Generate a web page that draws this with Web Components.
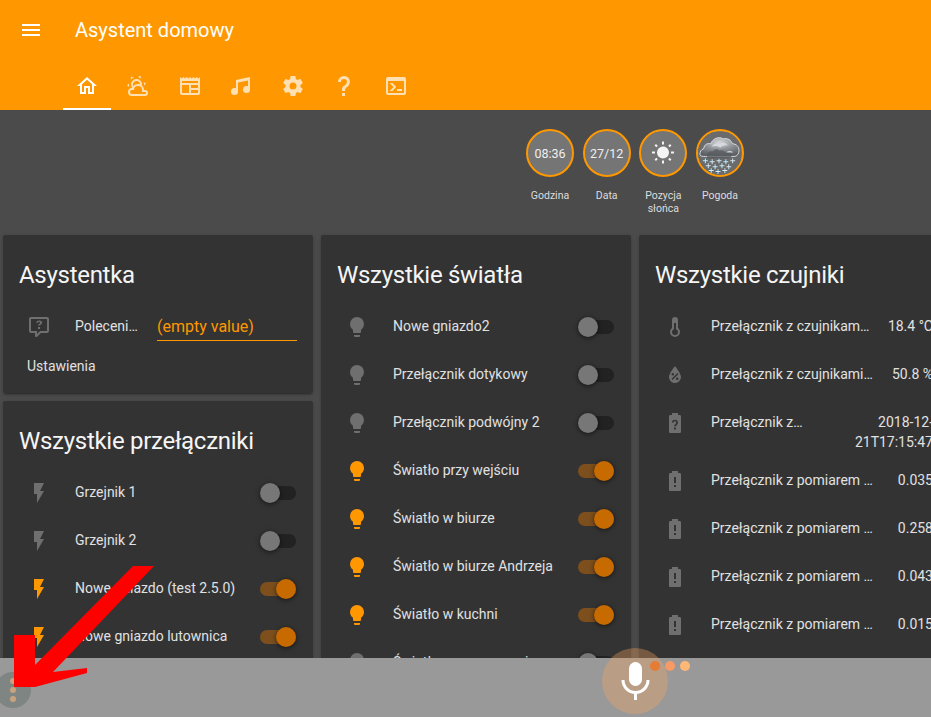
<!DOCTYPE html>
<html lang="pl">
<head>
<meta charset="utf-8">
<title>Asystent domowy</title>
<style>
  html, body { margin: 0; height: 100%; background: #4b4b4b; }
  body { font-family: Roboto, "Liberation Sans", sans-serif; overflow: hidden; }
</style>
</head>
<body>
<ha-app>
  <ha-toolbar slot="top" heading="Asystent domowy"></ha-toolbar>

  <ha-badges slot="badges">
    <ha-badge label="Godzina">08:36</ha-badge>
    <ha-badge label="Data">27/12</ha-badge>
    <ha-badge label="Pozycja słońca"><ha-icon name="sun" style="--size:24px;color:#f4f4f4"></ha-icon></ha-badge>
    <ha-badge label="Pogoda" pic><weather-pic></weather-pic></ha-badge>
  </ha-badges>

  <ha-column slot="cols">
    <ha-card heading="Asystentka">
      <ha-row icon="ask" name="Polecenie głosowe">
        <ha-input slot="end">(empty value)</ha-input>
      </ha-row>
      <ha-link>Ustawienia</ha-link>
    </ha-card>
    <ha-card heading="Wszystkie przełączniki">
      <ha-row icon="flash" name="Grzejnik 1"><ha-toggle slot="end"></ha-toggle></ha-row>
      <ha-row icon="flash" name="Grzejnik 2"><ha-toggle slot="end"></ha-toggle></ha-row>
      <ha-row icon="flash" on name="Nowe gniazdo (test 2.5.0)"><ha-toggle slot="end" on></ha-toggle></ha-row>
      <ha-row icon="flash" on name="Nowe gniazdo lutownica"><ha-toggle slot="end" on></ha-toggle></ha-row>
    </ha-card>
  </ha-column>

  <ha-column slot="cols">
    <ha-card heading="Wszystkie światła">
      <ha-row icon="bulb" name="Nowe gniazdo2"><ha-toggle slot="end"></ha-toggle></ha-row>
      <ha-row icon="bulb" name="Przełącznik dotykowy"><ha-toggle slot="end"></ha-toggle></ha-row>
      <ha-row icon="bulb" name="Przełącznik podwójny 2"><ha-toggle slot="end"></ha-toggle></ha-row>
      <ha-row icon="bulb" on name="Światło przy wejściu"><ha-toggle slot="end" on></ha-toggle></ha-row>
      <ha-row icon="bulb" on name="Światło w biurze"><ha-toggle slot="end" on></ha-toggle></ha-row>
      <ha-row icon="bulb" on name="Światło w biurze Andrzeja"><ha-toggle slot="end" on></ha-toggle></ha-row>
      <ha-row icon="bulb" on name="Światło w kuchni"><ha-toggle slot="end" on></ha-toggle></ha-row>
      <ha-row icon="bulb" name="Światło w serwerowni"><ha-toggle slot="end"></ha-toggle></ha-row>
    </ha-card>
  </ha-column>

  <ha-column slot="cols">
    <ha-card heading="Wszystkie czujniki">
      <ha-row icon="thermo" name="Przełącznik z czujnikami: temperatura"><ha-value slot="end">18.4 °C</ha-value></ha-row>
      <ha-row icon="drop" name="Przełącznik z czujnikami: wilgotność"><ha-value slot="end">50.8 %</ha-value></ha-row>
      <ha-row icon="batq" name="Przełącznik z czujnikami: ostatni odczyt" tall><ha-value slot="end" wide>2018-12-<br>21T17:15:47</ha-value></ha-row>
      <ha-row icon="bata" name="Przełącznik z pomiarem mocy 1"><ha-value slot="end">0.035</ha-value></ha-row>
      <ha-row icon="bata" name="Przełącznik z pomiarem mocy 2"><ha-value slot="end">0.258</ha-value></ha-row>
      <ha-row icon="bata" name="Przełącznik z pomiarem mocy 3"><ha-value slot="end">0.043</ha-value></ha-row>
      <ha-row icon="bata" name="Przełącznik z pomiarem mocy 4"><ha-value slot="end">0.015</ha-value></ha-row>
    </ha-card>
  </ha-column>

  <voice-bar slot="bar"></voice-bar>
</ha-app>

<script>
const PATHS = {
  menu: 'M3 6h18v2H3zM3 11h18v2H3zM3 16h18v2H3z',
  home: 'M12 5.69l5 4.5V18h-2v-6H9v6H7v-7.81l5-4.5M12 3L2 12h3v8h6v-6h2v6h6v-8h3L12 3z',
  cloudsun: 'M12.74,5.47C15.1,6.5 16.35,9.03 15.92,11.46C17.19,12.56 18,14.19 18,16V16.17C18.31,16.06 18.65,16 19,16A3,3 0 0,1 22,19A3,3 0 0,1 19,22H6A4,4 0 0,1 2,18A4,4 0 0,1 6,14H6.27C5,12.45 4.6,10.24 5.5,8.26C6.72,5.5 9.97,4.24 12.74,5.47M11.93,7.3C10.16,6.5 8.09,7.31 7.31,9.07C6.85,10.09 6.93,11.22 7.41,12.13C8.5,10.83 10.16,10 12,10C12.7,10 13.38,10.12 14,10.34C13.94,9.06 13.18,7.86 11.93,7.3M13.55,3.64C13,3.4 12.45,3.23 11.88,3.12L14.37,1.82L15.27,4.71C14.76,4.29 14.19,3.93 13.55,3.64M6.09,4.44C5.6,4.79 5.17,5.19 4.8,5.63L4.91,2.82L7.87,3.5C7.25,3.71 6.65,4.03 6.09,4.44M18,9.71C17.91,9.12 17.78,8.55 17.59,8L19.97,9.5L17.92,11.73C18.03,11.08 18.05,10.4 18,9.71M3.04,11.3C3.11,11.9 3.24,12.47 3.43,13L1.06,11.5L3.1,9.28C3,9.93 2.97,10.61 3.04,11.3M19,18H16V16A4,4 0 0,0 12,12A4,4 0 0,0 8,16H6A2,2 0 0,0 4,18A2,2 0 0,0 6,20H19A1,1 0 0,0 20,19A1,1 0 0,0 19,18Z',
  board: 'M2 3l1.67 1.5L5.33 3 7 4.5 8.67 3l1.66 1.5L12 3l1.67 1.5L15.33 3 17 4.5 18.67 3l1.66 1.5L22 3v16a2 2 0 0 1-2 2H4a2 2 0 0 1-2-2V3zM4 7v2h16V7H4zm0 4v8h7v-8H4zm9 0v3h7v-3h-7zm0 5v3h7v-3h-7z',
  music: 'M21,3V15.5A3.5,3.5 0 0,1 17.5,19A3.5,3.5 0 0,1 14,15.5A3.5,3.5 0 0,1 17.5,12C18.04,12 18.55,12.12 19,12.34V6.47L9,8.6V17.5A3.5,3.5 0 0,1 5.5,21A3.5,3.5 0 0,1 2,17.5A3.5,3.5 0 0,1 5.5,14C6.04,14 6.55,14.12 7,14.34V6L21,3Z',
  gear: 'M12,15.5A3.5,3.5 0 0,1 8.5,12A3.5,3.5 0 0,1 12,8.5A3.5,3.5 0 0,1 15.5,12A3.5,3.5 0 0,1 12,15.5M19.43,12.97C19.47,12.65 19.5,12.33 19.5,12C19.5,11.67 19.47,11.34 19.43,11L21.54,9.37C21.73,9.22 21.78,8.95 21.66,8.73L19.66,5.27C19.54,5.05 19.27,4.96 19.05,5.05L16.56,6.05C16.04,5.66 15.5,5.32 14.87,5.07L14.5,2.42C14.46,2.18 14.25,2 14,2H10C9.75,2 9.54,2.18 9.5,2.42L9.13,5.07C8.5,5.32 7.96,5.66 7.44,6.05L4.95,5.05C4.73,4.96 4.46,5.05 4.34,5.27L2.34,8.73C2.21,8.95 2.27,9.22 2.46,9.37L4.57,11C4.53,11.34 4.5,11.67 4.5,12C4.5,12.33 4.53,12.65 4.57,12.97L2.46,14.63C2.27,14.78 2.21,15.05 2.34,15.27L4.34,18.73C4.46,18.95 4.73,19.03 4.95,18.95L7.44,17.94C7.96,18.34 8.5,18.68 9.13,18.93L9.5,21.58C9.54,21.82 9.75,22 10,22H14C14.25,22 14.46,21.82 14.5,21.58L14.87,18.93C15.5,18.67 16.04,18.34 16.56,17.94L19.05,18.95C19.27,19.03 19.54,18.95 19.66,18.73L21.66,15.27C21.78,15.05 21.73,14.78 21.54,14.63L19.43,12.97Z',
  help: 'M10,19H13V22H10V19M12,2C17.35,2.22 19.68,7.62 16.5,11.67C15.67,12.67 14.33,13.33 13.67,14.17C13,15 13,16 13,17H10C10,15.33 10,13.92 10.67,12.92C11.33,11.92 12.67,11.33 13.5,10.67C15.92,8.43 15.32,5.26 12,5A3,3 0 0,0 9,8H6A6,6 0 0,1 12,2Z',
  console: 'M20,19V7H4V19H20M20,3A2,2 0 0,1 22,5V19A2,2 0 0,1 20,21H4A2,2 0 0,1 2,19V5C2,3.89 2.9,3 4,3H20M13,17V15H18V17H13M9.58,13L5.57,9H8.4L11.7,12.3C12.09,12.69 12.09,13.33 11.7,13.72L8.42,17H5.59L9.58,13Z',
  flash: 'M7,2V13H10V22L17,10H13L17,2H7Z',
  bulb: 'M12,2A7,7 0 0,0 5,9C5,11.38 6.19,13.47 8,14.74V17A1,1 0 0,0 9,18H15A1,1 0 0,0 16,17V14.74C17.81,13.47 19,11.38 19,9A7,7 0 0,0 12,2M9,21A1,1 0 0,0 10,22H14A1,1 0 0,0 15,21V20H9V21Z',
  thermo: 'M17,17A5,5 0 0,1 12,22A5,5 0 0,1 7,17C7,15.36 7.79,13.91 9,13V5A3,3 0 0,1 12,2A3,3 0 0,1 15,5V13C16.21,13.91 17,15.36 17,17M11,8V14.17C9.83,14.58 9,15.69 9,17A3,3 0 0,0 12,20A3,3 0 0,0 15,17C15,15.69 14.17,14.58 13,14.17V8H11Z',
  drop: 'M12,3.25C12,3.25 6,10 6,14C6,17.32 8.69,20 12,20A6,6 0 0,0 18,14C18,10 12,3.25 12,3.25M14.47,9.97L15.53,11.03L9.53,17.03L8.47,15.97L14.47,9.97M9.75,10A1.25,1.25 0 0,1 11,11.25A1.25,1.25 0 0,1 9.75,12.5A1.25,1.25 0 0,1 8.5,11.25A1.25,1.25 0 0,1 9.75,10M14.25,14.5A1.25,1.25 0 0,1 15.5,15.75A1.25,1.25 0 0,1 14.25,17A1.25,1.25 0 0,1 13,15.75A1.25,1.25 0 0,1 14.25,14.5Z',
  batq: 'M16.67,4H15V2H9V4H7.33A1.33,1.33 0 0,0 6,5.33V20.67C6,21.4 6.6,22 7.33,22H16.67A1.33,1.33 0 0,0 18,20.67V5.33C18,4.6 17.4,4 16.67,4ZM12.95,18.5H11.05V16.6H12.95V18.5ZM14.3,13.6C13.9,14.2 13.1,14.6 12.95,15.3H11.05C11.05,14.1 12,13.4 12.5,12.9C13,12.4 13.3,12 13.2,11.4C13.1,10.7 12.6,10.3 11.9,10.3C11.2,10.3 10.7,10.8 10.6,11.5H8.8C8.9,9.9 10.2,8.7 11.9,8.7C13.6,8.7 15,10 15,11.6C15,12.4 14.7,13 14.3,13.6Z',
  bata: 'M16.67,4H15V2H9V4H7.33A1.33,1.33 0 0,0 6,5.33V20.67C6,21.4 6.6,22 7.33,22H16.67A1.33,1.33 0 0,0 18,20.67V5.33C18,4.6 17.4,4 16.67,4ZM13,14H11V8H13V14ZM13,18H11V16H13V18Z',
  ask: 'M4,2H20A2,2 0 0,1 22,4V16A2,2 0 0,1 20,18H13.9L10.2,21.71C10,21.9 9.75,22 9.5,22H9A1,1 0 0,1 8,21V18H4A2,2 0 0,1 2,16V4C2,2.89 2.9,2 4,2ZM4,4V16H10V19.08L13.08,16H20V4H4ZM12.19,5.5C13.08,5.5 13.8,5.68 14.33,6.04C14.86,6.4 15.13,6.92 15.13,7.6C15.13,8.03 15,8.4 14.75,8.72C14.5,9.04 14.17,9.3 13.76,9.5C13.53,9.64 13.38,9.78 13.3,9.93C13.22,10.08 13.18,10.28 13.18,10.5H11C11,10.12 11.1,9.75 11.3,9.5C11.5,9.24 11.85,9 12.35,8.72C12.6,8.57 12.8,8.4 12.96,8.2C13.1,8 13.18,7.8 13.18,7.6C13.18,7.37 13.1,7.2 12.95,7.07C12.8,6.94 12.55,6.88 12.19,6.88C11.89,6.88 11.65,6.96 11.45,7.12C11.25,7.28 11.15,7.48 11.15,7.75H9.25C9.22,7 9.5,6.45 10.07,6.03C10.64,5.68 11.35,5.5 12.19,5.5ZM11,12V14H13V12H11Z',
  sun: 'M3.55,18.54L4.96,19.95L6.76,18.16L5.34,16.74M11,22.45C11.32,22.45 13,22.45 13,22.45V19.5H11M12,5.5A6,6 0 0,0 6,11.5A6,6 0 0,0 12,17.5A6,6 0 0,0 18,11.5C18,8.18 15.31,5.5 12,5.5M20,12.5H23V10.5H20M17.24,18.16L19.04,19.95L20.45,18.54L18.66,16.74M20.45,4.46L19.04,3.05L17.24,4.84L18.66,6.26M13,0.55H11V3.5H13M4,10.5H1V12.5H4M6.76,4.84L4.96,3.05L3.55,4.46L5.34,6.26L6.76,4.84Z'
};

class HaIcon extends HTMLElement {
  connectedCallback() {
    const root = this.shadowRoot || this.attachShadow({ mode: 'open' });
    root.innerHTML = `
      <style>
        :host { display: inline-flex; width: var(--size, 24px); height: var(--size, 24px); flex: none; }
        svg { width: 100%; height: 100%; fill: currentColor; fill-rule: evenodd; display: block; }
      </style>
      <svg viewBox="0 0 24 24"><path d="${PATHS[this.getAttribute('name')] || ''}"></path></svg>`;
  }
}
customElements.define('ha-icon', HaIcon);

class HaApp extends HTMLElement {
  constructor() {
    super();
    this.attachShadow({ mode: 'open' }).innerHTML = `
      <style>
        :host { display: block; position: relative; width: 931px; height: 717px; overflow: hidden; background: #4b4b4b; }
        .cols { display: flex; gap: 8px; padding-left: 3px; width: 1200px; }
        .arrow { position: absolute; left: 0; top: 0; pointer-events: none; }
      </style>
      <slot name="top"></slot>
      <slot name="badges"></slot>
      <div class="cols"><slot name="cols"></slot></div>
      <slot name="bar"></slot>
      <svg class="arrow" width="931" height="717"><polygon fill="#f00" points="133,566 154,566 53,672 87,668 87,673 35,687 14,687 14,635 35,635 35,665"></polygon></svg>`;
  }
}
customElements.define('ha-app', HaApp);

class HaToolbar extends HTMLElement {
  connectedCallback() {
    const tabs = ['home', 'cloudsun', 'board', 'music', 'gear', 'help', 'console'];
    this.attachShadow({ mode: 'open' }).innerHTML = `
      <style>
        :host { display: block; height: 110px; background: #ff9800; color: #fff; }
        .top { display: flex; align-items: center; height: 60px; padding-left: 19px; }
        .top ha-icon { --size: 24px; margin-right: 32px; }
        h1 { margin: 0; font-size: 20px; font-weight: 400; line-height: 60px; }
        .tabs { display: flex; height: 50px; padding-left: 61.3px; }
        .tab { position: relative; width: 51.45px; display: flex; align-items: center; justify-content: center; color: rgba(255,255,255,.7); padding-top: 2px; box-sizing: border-box; }
        .tab[active] { color: #fff; }
        .tab[active]::after { content: ""; position: absolute; left: 1.7px; right: 1.7px; bottom: 0; height: 2px; background: #fff; }
      </style>
      <div class="top"><ha-icon name="menu"></ha-icon><h1>${this.getAttribute('heading')}</h1></div>
      <div class="tabs">${tabs.map((t, i) => `<div class="tab" ${i ? '' : 'active'}><ha-icon name="${t}"></ha-icon></div>`).join('')}</div>`;
  }
}
customElements.define('ha-toolbar', HaToolbar);

class HaBadges extends HTMLElement {
  constructor() {
    super();
    this.attachShadow({ mode: 'open' }).innerHTML = `
      <style>
        :host { display: flex; height: 125px; padding: 19px 0 0 521.7px; box-sizing: border-box; }
      </style>
      <slot></slot>`;
  }
}
customElements.define('ha-badges', HaBadges);

class HaBadge extends HTMLElement {
  connectedCallback() {
    this.attachShadow({ mode: 'open' }).innerHTML = `
      <style>
        :host { display: flex; flex-direction: column; align-items: center; width: 56.67px; font-size: 10.5px; color: #ddd; }
        .ring { width: 48px; height: 48px; box-sizing: border-box; border: 2.5px solid #ff9800; border-radius: 50%; background: #757575; display: flex; align-items: center; justify-content: center; font-size: 12.5px; color: #f0f0f0; overflow: hidden; }
        .label { margin-top: 12px; text-align: center; line-height: 13px; width: 50px; }
      </style>
      <div class="ring"><slot></slot></div>
      <div class="label">${this.getAttribute('label')}</div>`;
  }
}
customElements.define('ha-badge', HaBadge);

// the weather photo of the reference is a raster, drawn here by hand
class WeatherPic extends HTMLElement {
  constructor() {
    super();
    let flakes = '';
    const rows = [[6, 13, 20, 27, 34], [9, 16, 23, 30], [12, 19, 26]];
    rows.forEach((xs, r) => xs.forEach((x, i) => {
      const y = 28 + r * 5 + (i % 2);
      flakes += `<path d="M${x} ${y}h3v3h-3z" fill="#2f6d86"></path><path d="M${x + 1} ${y - 1}h1v5h-1zM${x - 1} ${y + 1}h5v1h-5z" fill="#dfe8ec"></path>`;
    }));
    this.attachShadow({ mode: 'open' }).innerHTML = `
      <style>:host { display: block; width: 43px; height: 43px; } svg { display: block; }</style>
      <svg width="43" height="43" viewBox="0 0 44 44">
        <defs>
          <radialGradient id="c" cx=".5" cy=".25" r=".8">
            <stop offset="0" stop-color="#d4d6d9"></stop>
            <stop offset=".5" stop-color="#8b8f94"></stop>
            <stop offset="1" stop-color="#55595e"></stop>
          </radialGradient>
        </defs>
        <rect width="44" height="44" fill="#6b6b6b"></rect>
        ${flakes}
        <path fill="url(#c)" stroke="#d9dbde" stroke-width="1" d="M2 23c0-3 1-5 4-6 0-4 4-6 7-5 2-5 8-8 13-5 4-1 8 1 9 5 4 0 7 3 7 7 0 3-2 6-5 6H8c-3 0-6 0-6-2z"></path>
        <path fill="#55595e" opacity=".75" d="M9 24c0-3 3-5 6-4 2-3 5-3 7-1 3-1 5 0 6 2 3-1 6 0 7 3-2 3-5 3-8 3H12c-2 0-3-1-3-3z"></path>
        <path fill="#dfe1e3" opacity=".8" d="M14 15c2-3 5-4 8-3 3-2 7-1 9 2-3-1-6 0-8 2-3-2-6-2-9-1zM29 21c2-2 5-2 7 0-2 0-5 0-7 0z"></path>
      </svg>`;
  }
}
customElements.define('weather-pic', WeatherPic);

class HaColumn extends HTMLElement {
  constructor() {
    super();
    this.attachShadow({ mode: 'open' }).innerHTML = `
      <style>:host { display: flex; flex-direction: column; gap: 8px; width: 310px; flex: none; }</style>
      <slot></slot>`;
  }
}
customElements.define('ha-column', HaColumn);

class HaCard extends HTMLElement {
  connectedCallback() {
    this.attachShadow({ mode: 'open' }).innerHTML = `
      <style>
        :host { display: block; background: #333; border-radius: 2px; box-shadow: 0 2px 2px rgba(0,0,0,.14), 0 1px 5px rgba(0,0,0,.12), 0 3px 1px -2px rgba(0,0,0,.2); }
        h2 { margin: 0; padding: 24px 16px 15px; font-size: 24px; font-weight: 400; line-height: 32px; letter-spacing: -0.012em; color: #f5f5f5; }
        .body { padding: 0 16px 16px; display: flex; flex-direction: column; gap: 8px; }
      </style>
      <h2>${this.getAttribute('heading')}</h2>
      <div class="body"><slot></slot></div>`;
  }
}
customElements.define('ha-card', HaCard);

class HaRow extends HTMLElement {
  connectedCallback() {
    const on = this.hasAttribute('on');
    this.attachShadow({ mode: 'open' }).innerHTML = `
      <style>
        :host { display: flex; align-items: center; min-height: 40px; font-size: 14px; color: #e1e1e1; }
        :host([tall]) { align-items: flex-start; padding-top: 10px; box-sizing: border-box; height: 50px; }
        .ic { width: 40px; display: flex; justify-content: center; margin: 2px 16px 0 0; flex: none; color: ${on ? '#ff9800' : '#6f6f6f'}; }
        :host([tall]) .ic { margin-top: -1px; }
        .name { flex: 1; min-width: 0; white-space: nowrap; overflow: hidden; text-overflow: ellipsis; line-height: 20px; }
      </style>
      <div class="ic"><ha-icon name="${this.getAttribute('icon')}"></ha-icon></div>
      <div class="name">${this.getAttribute('name')}</div>
      <slot name="end"></slot>`;
  }
}
customElements.define('ha-row', HaRow);

class HaToggle extends HTMLElement {
  constructor() {
    super();
    this.attachShadow({ mode: 'open' }).innerHTML = `
      <style>
        :host { display: block; position: relative; width: 36px; height: 14px; margin: 2px 1px 0 16px; flex: none; border-radius: 7px; background: #222; }
        .thumb { position: absolute; top: -3px; left: 0; width: 20px; height: 20px; border-radius: 50%; background: #777; box-shadow: 0 1px 5px rgba(0,0,0,.6); }
        :host([on]) { background: #7d4f1d; }
        :host([on]) .thumb { left: 16px; background: #c76a00; }
      </style>
      <div class="thumb"></div>`;
  }
}
customElements.define('ha-toggle', HaToggle);

class HaValue extends HTMLElement {
  constructor() {
    super();
    this.attachShadow({ mode: 'open' }).innerHTML = `
      <style>
        :host { display: block; margin-left: 16px; flex: none; text-align: right; line-height: 20px; white-space: nowrap; }
        :host([wide]) { width: 111px; }
      </style>
      <slot></slot>`;
  }
}
customElements.define('ha-value', HaValue);

class HaInput extends HTMLElement {
  constructor() {
    super();
    this.attachShadow({ mode: 'open' }).innerHTML = `
      <style>
        :host { display: block; width: 140px; height: 29px; margin-left: 16px; flex: none; box-sizing: border-box; border-bottom: 1px solid #ff9800; color: #ff9800; font-size: 16px; line-height: 24px; padding-top: 3px; }
      </style>
      <slot></slot>`;
  }
}
customElements.define('ha-input', HaInput);

class HaLink extends HTMLElement {
  constructor() {
    super();
    this.attachShadow({ mode: 'open' }).innerHTML = `
      <style>:host { display: block; padding: 1px 0 0 8px; font-size: 14px; line-height: 22px; color: #e1e1e1; }</style>
      <slot></slot>`;
  }
}
customElements.define('ha-link', HaLink);

class VoiceBar extends HTMLElement {
  constructor() {
    super();
    this.attachShadow({ mode: 'open' }).innerHTML = `
      <style>
        :host { display: block; position: absolute; left: 0; right: 0; bottom: 0; height: 59px; background: #999; }
        .mic { position: absolute; left: 602px; top: -10px; width: 66px; height: 66px; border-radius: 50%; background: rgba(250,165,95,.34); }
        .mic svg { display: block; }
        .dot { position: absolute; top: 3px; width: 10px; height: 10px; border-radius: 50%; }
        .menu { position: absolute; left: -5px; top: 14px; width: 36px; height: 36px; border-radius: 50%; background: #7f8583; }
        .menu i { position: absolute; left: 15px; width: 6px; height: 6px; border-radius: 50%; background: #c9a27f; }
      </style>
      <div class="mic">
        <svg width="66" height="66" viewBox="0 0 66 66">
          <rect x="27" y="14" width="13" height="24" rx="6.5" fill="#fff"></rect>
          <path d="M21 32a12.5 12.5 0 0 0 25 0" fill="none" stroke="#fff" stroke-width="3"></path>
          <rect x="32" y="44" width="3" height="8" fill="#fff"></rect>
        </svg>
      </div>
      <div class="dot" style="left:650px;background:#e57c33"></div>
      <div class="dot" style="left:665px;background:#f79a66"></div>
      <div class="dot" style="left:680px;background:#fdb877"></div>
      <div class="menu"><i style="top:6px"></i><i style="top:15px"></i><i style="top:24px"></i></div>`;
  }
}
customElements.define('voice-bar', VoiceBar);
</script>
</body>
</html>
